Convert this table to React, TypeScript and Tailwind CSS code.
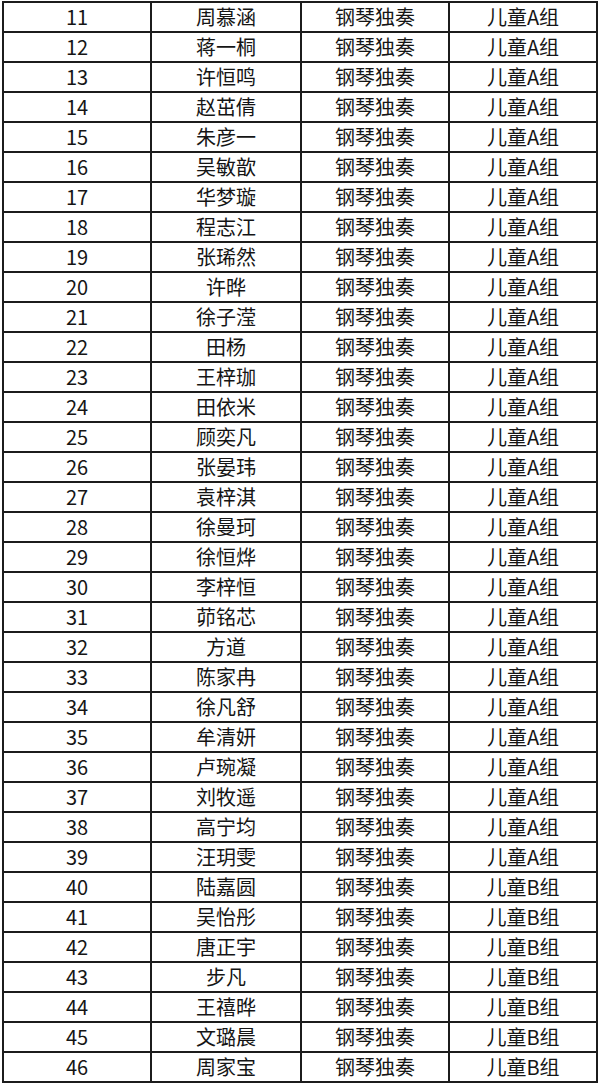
import React from 'react';

const names = [
  '周慕涵', '蒋一桐', '许恒鸣', '赵茁倩', '朱彦一', '吴敏歆', '华梦璇', '程志江', '张琋然', '许晔',
  '徐子滢', '田杨', '王梓珈', '田依米', '顾奕凡', '张晏玮', '袁梓淇', '徐曼珂', '徐恒烨', '李梓恒',
  '茆铭芯', '方道', '陈家冉', '徐凡舒', '牟清妍', '卢琬凝', '刘牧遥', '高宁均', '汪玥雯', '陆嘉圆',
  '吴怡彤', '唐正宇', '步凡', '王禧晔', '文璐晨', '周家宝',
];

const rows = names.map((name, i) => {
  const no = 11 + i;
  return { no, name, piece: '钢琴独奏', group: no < 40 ? '儿童A组' : '儿童B组' };
});

const Cell = ({ children }: { children: React.ReactNode }) => (
  <div className="bg-white h-[28px] flex items-center justify-center leading-none">{children}</div>
);

const App = () => {
  return (
    <div className="w-[600px] h-[1084px] bg-white overflow-hidden">
      <div
        className="ml-[2px] mt-[1px] w-[596px] grid grid-cols-[146px_148px_146px_146px] gap-[2px] p-[2px] bg-[#1c1c1c] text-[20px] text-[#151515]"
        style={{ fontFamily: '"Noto Sans CJK SC", "Noto Sans", sans-serif' }}
      >
        {rows.map((r) => (
          <React.Fragment key={r.no}>
            <Cell>{r.no}</Cell>
            <Cell>{r.name}</Cell>
            <Cell>{r.piece}</Cell>
            <Cell>{r.group}</Cell>
          </React.Fragment>
        ))}
      </div>
    </div>
  );
};

export default App;
